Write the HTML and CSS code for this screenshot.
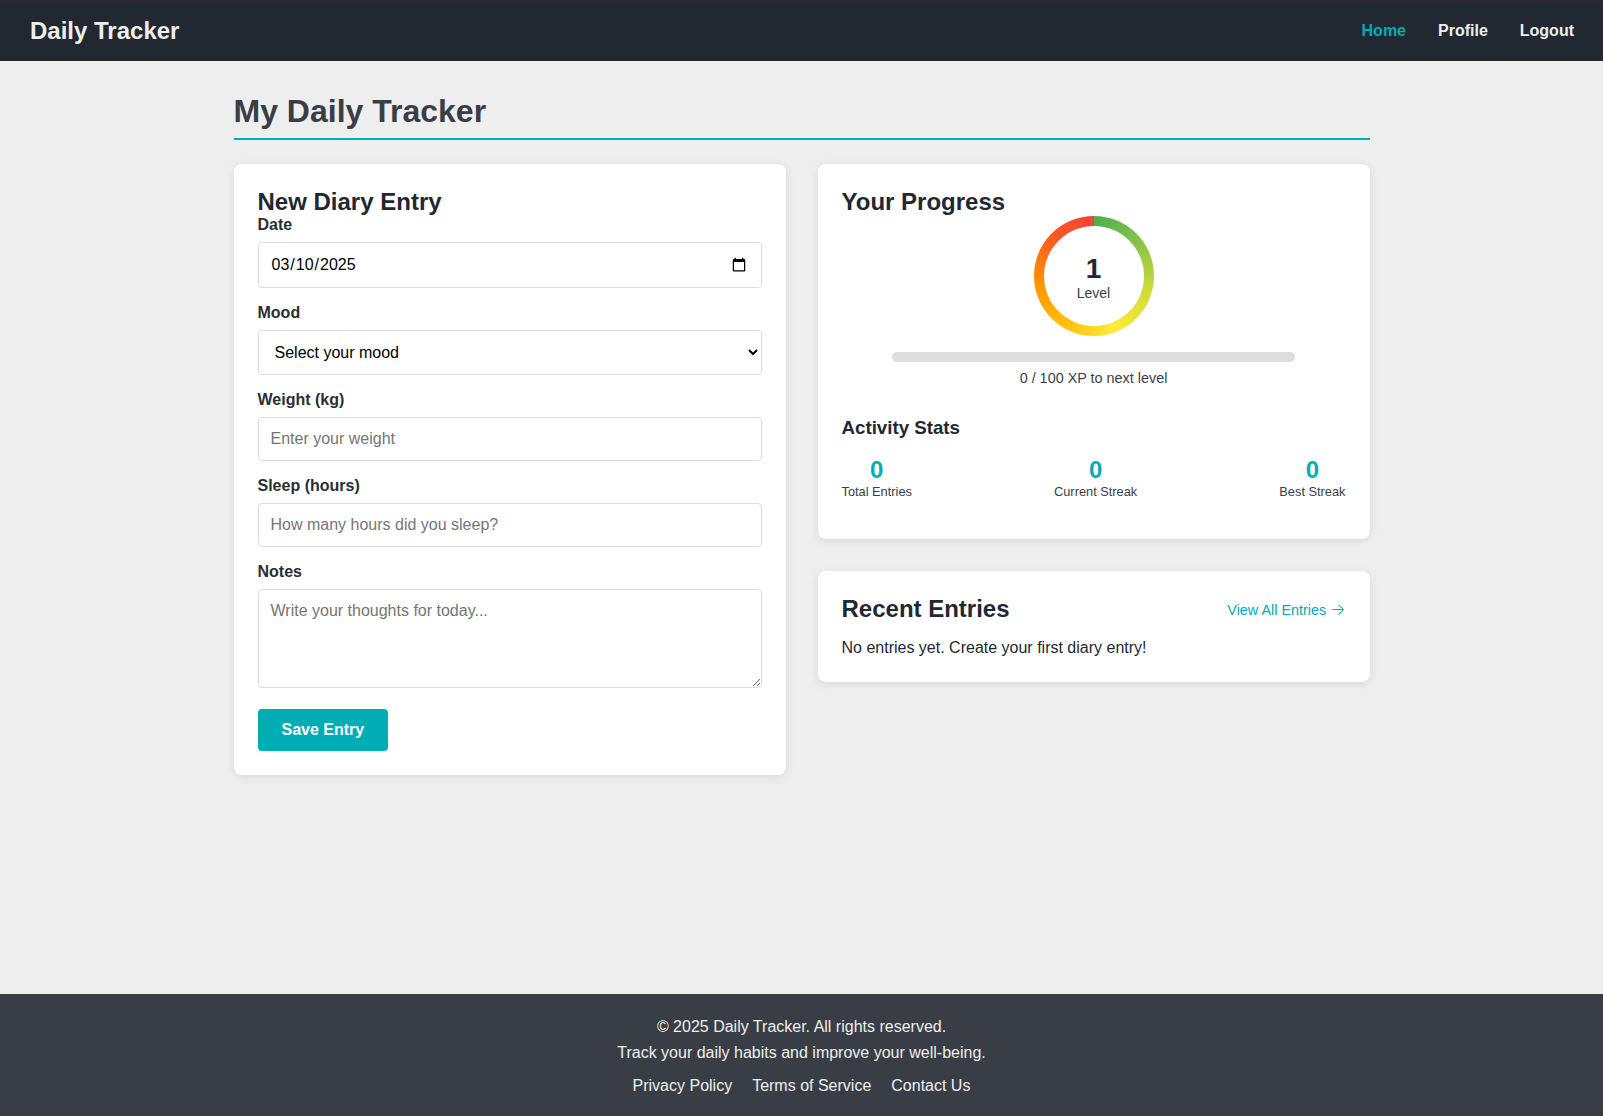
FILE: index.html
```html
<!DOCTYPE html>
<html lang="en">
<head>
<meta charset="utf-8">
<title>Daily Tracker</title>
<link rel="stylesheet" href="styles.css">
</head>
<body>
<nav class="navbar">
  <div class="logo">Daily Tracker</div>
  <div class="nav-links">
    <a href="#" class="nav-link active">Home</a>
    <a href="#" class="nav-link">Profile</a>
    <a href="#" class="nav-link">Logout</a>
  </div>
</nav>

<main class="main">
  <h1 class="page-title">My Daily Tracker</h1>
  <div class="dashboard">
    <section class="card entry-card">
      <h2 class="card-title">New Diary Entry</h2>
      <form class="entry-form">
        <div class="form-group">
          <label class="form-label" for="date">Date</label>
          <input class="form-control" type="date" id="date" value="2025-03-10">
        </div>
        <div class="form-group">
          <label class="form-label" for="mood">Mood</label>
          <select class="form-control form-select" id="mood">
            <option>Select your mood</option>
            <option>Happy</option>
            <option>Neutral</option>
            <option>Sad</option>
          </select>
        </div>
        <div class="form-group">
          <label class="form-label" for="weight">Weight (kg)</label>
          <input class="form-control" type="text" id="weight" placeholder="Enter your weight">
        </div>
        <div class="form-group">
          <label class="form-label" for="sleep">Sleep (hours)</label>
          <input class="form-control" type="text" id="sleep" placeholder="How many hours did you sleep?">
        </div>
        <div class="form-group notes-group">
          <label class="form-label" for="notes">Notes</label>
          <textarea class="form-control form-textarea" id="notes" rows="4" placeholder="Write your thoughts for today..."></textarea>
        </div>
        <button type="button" class="btn-primary">Save Entry</button>
      </form>
    </section>

    <div class="side-column">
      <section class="card progress-card">
        <h2 class="card-title">Your Progress</h2>
        <div class="level-area">
          <div class="level-ring">
            <div class="level-inner">
              <span class="level-number">1</span>
              <span class="level-label">Level</span>
            </div>
          </div>
          <div class="xp-bar"><div class="xp-fill" style="width:0%"></div></div>
          <p class="xp-text">0 / 100 XP to next level</p>
        </div>
        <h3 class="stats-title">Activity Stats</h3>
        <div class="stats">
          <div class="stat">
            <div class="stat-value">0</div>
            <div class="stat-label">Total Entries</div>
          </div>
          <div class="stat">
            <div class="stat-value">0</div>
            <div class="stat-label">Current Streak</div>
          </div>
          <div class="stat">
            <div class="stat-value">0</div>
            <div class="stat-label">Best Streak</div>
          </div>
        </div>
      </section>

      <section class="card recent-card">
        <div class="recent-header">
          <h2 class="card-title">Recent Entries</h2>
          <a href="#" class="view-all">View All Entries <span class="arrow">→</span></a>
        </div>
        <p class="empty-text">No entries yet. Create your first diary entry!</p>
      </section>
    </div>
  </div>
</main>

<footer class="footer">
  <p class="footer-line">© 2025 Daily Tracker. All rights reserved.</p>
  <p class="footer-line footer-tagline">Track your daily habits and improve your well-being.</p>
  <div class="footer-links">
    <a href="#" class="footer-link">Privacy Policy</a>
    <a href="#" class="footer-link">Terms of Service</a>
    <a href="#" class="footer-link">Contact Us</a>
  </div>
</footer>
</body>
</html>
```

FILE: styles.css
```css
* {
  box-sizing: border-box;
}

html, body {
  margin: 0;
  padding: 0;
}

body {
  font-family: "Liberation Sans", Arial, sans-serif;
  background: #eeeeee;
  color: #222831;
  min-height: 100vh;
  display: flex;
  flex-direction: column;
}

/* Navbar */
.navbar {
  background: #222831;
  border-top: 1px solid #2b2b2b;
  padding: 16px 29px 16px 30px;
  display: flex;
  justify-content: space-between;
  align-items: center;
}

.logo {
  font-size: 24px;
  font-weight: bold;
  color: #eeeeee;
}

.nav-links {
  display: flex;
  gap: 32px;
}

.nav-link {
  color: #eeeeee;
  font-size: 16px;
  font-weight: bold;
  text-decoration: none;
}

.nav-link.active {
  color: #00adb5;
}

/* Main */
.main {
  flex: 1 0 auto;
  width: 100%;
  max-width: 1200px;
  margin: 0 auto;
  padding: 32px;
}

.page-title {
  margin: 0 0 24px;
  padding-bottom: 8px;
  font-size: 32px;
  color: #393e46;
  border-bottom: 2px solid #00adb5;
}

.dashboard {
  display: grid;
  grid-template-columns: 1fr 1fr;
  gap: 32px;
  align-items: start;
}

.side-column {
  display: flex;
  flex-direction: column;
  gap: 32px;
}

.card {
  background: #ffffff;
  border-radius: 8px;
  padding: 24px;
  box-shadow: 0 2px 10px rgba(0, 0, 0, 0.09);
}

.card-title {
  margin: 0;
  font-size: 24px;
  color: #222831;
}

/* Form */
.form-group {
  margin-bottom: 16px;
}

.notes-group {
  margin-bottom: 21px;
}

.form-label {
  display: block;
  margin-bottom: 8px;
  font-size: 16px;
  font-weight: bold;
  color: #2a2f36;
}

.form-control {
  display: block;
  width: 100%;
  padding: 12px;
  border: 1px solid #dddddd;
  border-radius: 4px;
  font-family: "Liberation Sans", Arial, sans-serif;
  font-size: 16px;
  color: #000000;
  background: #ffffff;
}

.form-control::placeholder {
  color: #757575;
}

.form-textarea {
  height: 99px;
  resize: vertical;
}

.btn-primary {
  background: #00adb5;
  color: #ffffff;
  border: none;
  border-radius: 4px;
  padding: 12px 24px;
  font-family: "Liberation Sans", Arial, sans-serif;
  font-size: 16px;
  font-weight: bold;
  cursor: pointer;
}

/* Progress */
.level-area {
  display: flex;
  flex-direction: column;
  align-items: center;
}

.level-ring {
  width: 120px;
  height: 120px;
  border-radius: 50%;
  padding: 10px;
  background: conic-gradient(#4caf50 0deg, #8bc34a 55deg, #cddc39 105deg, #ffeb3b 160deg, #ffc107 210deg, #ff9800 260deg, #ff5722 315deg, #f44336 360deg);
}

.level-inner {
  width: 100%;
  height: 100%;
  border-radius: 50%;
  background: #ffffff;
  display: flex;
  flex-direction: column;
  align-items: center;
  justify-content: center;
  padding-top: 1px;
}

.level-number {
  font-size: 28px;
  font-weight: bold;
  color: #222831;
}

.level-label {
  font-size: 14px;
  color: #393e46;
}

.xp-bar {
  width: 80%;
  height: 10px;
  margin-top: 16px;
  background: #dddddd;
  border-radius: 5px;
  overflow: hidden;
}

.xp-fill {
  height: 100%;
  background: #00adb5;
}

.xp-text {
  margin: 8px 0 0;
  font-size: 14.4px;
  color: #393e46;
}

.stats-title {
  margin: 31px 0 0;
  font-size: 18.72px;
  color: #222831;
}

.stats {
  display: flex;
  justify-content: space-between;
  margin: 17px 0 16px;
}

.stat {
  text-align: center;
}

.stat-value {
  font-size: 24px;
  font-weight: bold;
  color: #00adb5;
}

.stat-label {
  font-size: 12.8px;
  color: #393e46;
}

/* Recent */
.recent-card {
  padding-bottom: 25px;
}

.recent-header {
  display: flex;
  justify-content: space-between;
  align-items: center;
}

.view-all {
  color: #00adb5;
  font-size: 14.4px;
  line-height: 16px;
  text-decoration: none;
}

.arrow {
  font-family: Inter, "DejaVu Sans", sans-serif;
  font-size: 16px;
  font-weight: 300;
  line-height: 1;
}

.empty-text {
  margin: 16px 0 0;
  font-size: 16px;
  color: #222831;
}

/* Footer */
.footer {
  background: #393e46;
  color: #eeeeee;
  text-align: center;
  padding: 24px 20px 21px;
}

.footer-line {
  margin: 0 0 8px;
  font-size: 16px;
}

.footer-tagline {
  margin-bottom: 15px;
}

.footer-links {
  display: flex;
  justify-content: center;
  gap: 20px;
}

.footer-link {
  color: #eeeeee;
  text-decoration: none;
  font-size: 16px;
}
```
